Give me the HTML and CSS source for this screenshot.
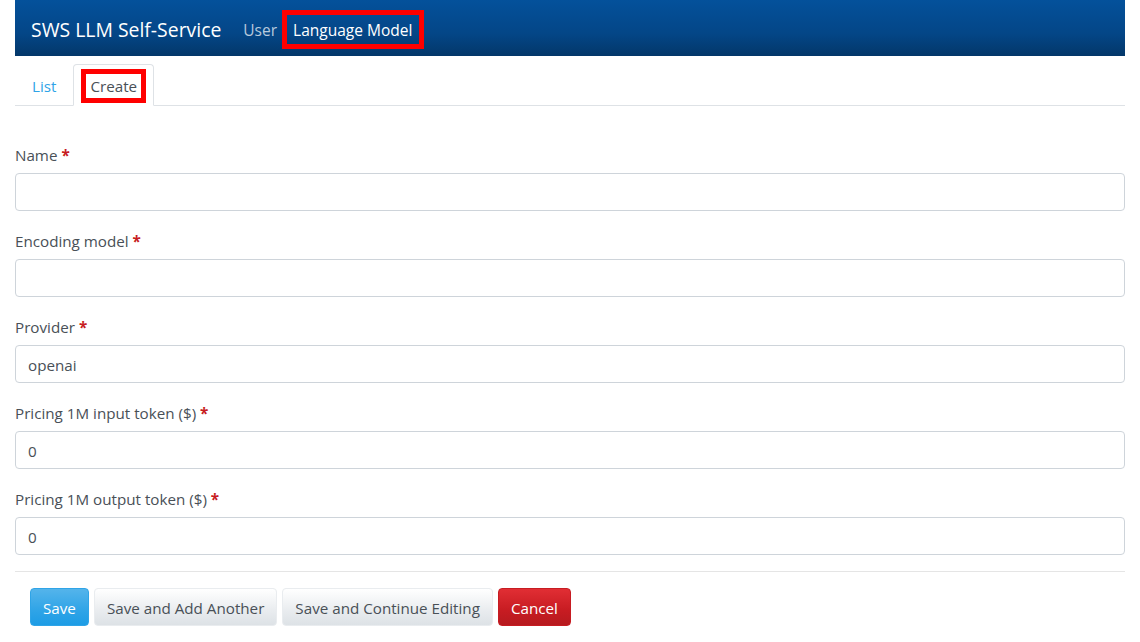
FILE: index.html
```html
<!DOCTYPE html>
<html lang="en">
<head>
<meta charset="utf-8">
<title>SWS LLM Self-Service</title>
<link rel="stylesheet" href="styles.css">
</head>
<body>
<div class="container">
  <nav class="navbar">
    <a class="brand" href="#">SWS LLM Self-Service</a>
    <ul class="nav-links">
      <li><a class="nav-link" href="#">User</a></li>
      <li><a class="nav-link active" href="#"><span class="mark mark-nav">Language Model</span></a></li>
    </ul>
  </nav>

  <ul class="tabs">
    <li><a class="tab" href="#">List</a></li>
    <li><a class="tab active" href="#"><span class="mark mark-tab">Create</span></a></li>
  </ul>

  <form class="form">
    <div class="group">
      <label class="label">Name <strong class="req">*</strong></label>
      <input class="input" type="text" value="">
    </div>
    <div class="group">
      <label class="label">Encoding model <strong class="req">*</strong></label>
      <input class="input" type="text" value="">
    </div>
    <div class="group">
      <label class="label">Provider <strong class="req">*</strong></label>
      <input class="input" type="text" value="openai">
    </div>
    <div class="group">
      <label class="label">Pricing 1M input token ($) <strong class="req">*</strong></label>
      <input class="input" type="text" value="0">
    </div>
    <div class="group">
      <label class="label">Pricing 1M output token ($) <strong class="req">*</strong></label>
      <input class="input" type="text" value="0">
    </div>
    <hr class="rule">
    <div class="actions">
      <button type="button" class="btn btn-primary">Save</button>
      <button type="button" class="btn btn-secondary">Save and Add Another</button>
      <button type="button" class="btn btn-secondary">Save and Continue Editing</button>
      <button type="button" class="btn btn-danger">Cancel</button>
    </div>
  </form>
</div>
</body>
</html>
```

FILE: styles.css
```css
* { box-sizing: border-box; }
html, body { margin: 0; padding: 0; background: #fff; }
body {
  font-family: "Open Sans", "Noto Sans", "Liberation Sans", sans-serif;
  font-size: 15.2px;
  line-height: 24px;
  color: #495057;
}
a { text-decoration: none; }
.container { width: 1140px; padding: 0 15px; }

.navbar {
  display: flex;
  align-items: center;
  height: 56px;
  padding: 10px 16px 6px;
  background-image: linear-gradient(#04519b, #044687 60%, #033769);
}
.brand {
  color: #fff;
  font-size: 19.4px;
  line-height: 30px;
  margin-right: 14px;
}
.nav-links { display: flex; list-style: none; margin: 0; padding: 0; }
.nav-link {
  display: block;
  padding: 8px 8px;
  font-size: 15.5px;
  color: rgba(255, 255, 255, 0.72);
}
.nav-link.active { color: #fff; }

.mark {
  display: inline-block;
  outline: 5px solid #ff0000;
}
.mark-nav {
  padding: 3px 7px 2px 6px;
  margin: -3px -7px -2px -6px;
}
.mark-tab {
  padding: 0 4px;
  margin: 0 -4px;
}

.tabs {
  display: flex;
  list-style: none;
  margin: 8px 0 0;
  padding: 0;
  border-bottom: 1px solid #dee2e6;
}
.tabs li { margin-bottom: -1px; }
.tab {
  display: block;
  padding: 9px 16px 7px;
  border: 1px solid transparent;
  border-top-left-radius: 4px;
  border-top-right-radius: 4px;
  color: #2fa4e7;
}
.tab.active {
  color: #495057;
  background: #fff;
  border-color: #dee2e6 #dee2e6 #fff;
}

.form { padding-top: 35px; }
.group { margin-bottom: 16px; }
.label { display: block; padding-top: 2px; margin-bottom: 6px; }
.req { color: #c71c22; font-weight: 700; }
.input {
  display: block;
  width: 100%;
  height: 38px;
  padding: 7px 12px 5px;
  font: inherit;
  color: #495057;
  background: #fff;
  border: 1px solid #ced4da;
  border-radius: 4px;
}

.rule {
  margin: 0 0 16px;
  border: 0;
  border-top: 1px solid rgba(0, 0, 0, 0.1);
}
.actions { display: flex; gap: 5px; padding-left: 15px; }
.btn {
  height: 38px;
  padding: 7px 12px 5px;
  font: inherit;
  border: 1px solid transparent;
  border-radius: 4px;
  cursor: pointer;
}
.btn-primary {
  color: #fff;
  background-image: linear-gradient(#54b4eb, #2fa4e7 60%, #1d9ce5);
  border-color: #2fa4e7;
}
.btn-secondary {
  color: #495057;
  background-image: linear-gradient(#fff, #e9ecef 60%, #dde2e6);
  border-color: #e9ecef;
}
.btn-danger {
  color: #fff;
  background-image: linear-gradient(#e12e34, #c71c22 60%, #b61a1f);
  border-color: #c71c22;
}
```
